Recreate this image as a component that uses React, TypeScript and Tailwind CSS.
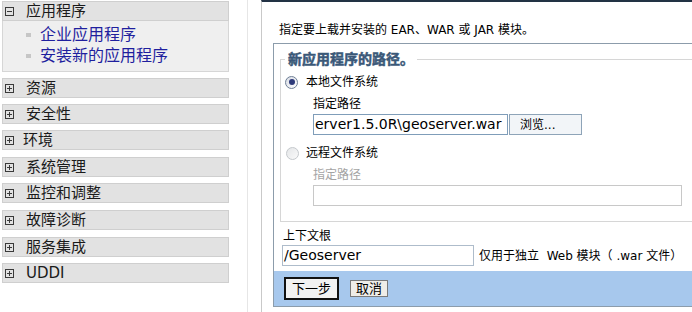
import React from "react";

const cjk = { fontFamily: '"DejaVu Sans", "Noto Sans CJK SC", sans-serif' };

const navItems = [
  { label: "资源", mt: "mt-[6px]", pad: "ml-[12px]" },
  { label: "安全性", mt: "mt-[6px]", pad: "ml-[12px]" },
  { label: "环境", mt: "mt-[6px]", pad: "ml-[9px]" },
  { label: "系统管理", mt: "mt-[7px]", pad: "ml-[12px]" },
  { label: "监控和调整", mt: "mt-[6px]", pad: "ml-[12px]" },
  { label: "故障诊断", mt: "mt-[7px]", pad: "ml-[12px]" },
  { label: "服务集成", mt: "mt-[7px]", pad: "ml-[12px]" },
  { label: "UDDI", mt: "mt-[6px]", pad: "ml-[12px]" },
];

function ToggleBox({ open }: { open?: boolean }) {
  return (
    <svg width="9" height="9" viewBox="0 0 9 9" className="shrink-0">
      <rect x="0.5" y="0.5" width="8" height="8" fill="none" stroke="#3a3a3a" />
      <line x1="2" y1="4.5" x2="7" y2="4.5" stroke="#3a3a3a" />
      {!open && <line x1="4.5" y1="2" x2="4.5" y2="7" stroke="#3a3a3a" />}
    </svg>
  );
}

function Radio({ checked }: { checked?: boolean }) {
  return checked ? (
    <span className="flex h-[13px] w-[13px] items-center justify-center rounded-full border border-[#6f7f96] bg-gradient-to-br from-[#d8dce4] to-white">
      <span className="h-[6px] w-[6px] rounded-full bg-[#2e3a7a]" />
    </span>
  ) : (
    <span className="h-[13px] w-[13px] rounded-full border border-[#c4c8cc] bg-gradient-to-br from-[#e4e6e8] to-[#fafafa]" />
  );
}

export default function App() {
  return (
    <div className="flex h-[312px] w-[692px] overflow-hidden bg-white text-black" style={cjk}>
      {/* left navigation */}
      <div className="w-[248px] shrink-0 border-r border-[#e6e6e6] pl-[2px] pr-[18px] pt-[1px]">
        <div className="flex h-[20px] items-center border border-[#cfcfcf] bg-[#e2e2e2] pl-[2px]">
          <ToggleBox open />
          <span className="ml-[12px] text-[15px] leading-[18px] text-[#1a1a1a]">应用程序</span>
        </div>
        <div className="h-[51px] border-x border-b border-[#d6d6d6] bg-[#efefef] pt-[3px]">
          {["企业应用程序", "安装新的应用程序"].map((s) => (
            <div key={s} className="flex h-[21px] items-center pl-[23px]">
              <span className="h-[4px] w-[5px] bg-[#c6c6c6]" />
              <span className="ml-[9px] text-[16px] leading-[20px] text-[#1f1f9e]">{s}</span>
            </div>
          ))}
        </div>
        {navItems.map((n) => (
          <div
            key={n.label}
            className={`${n.mt} flex h-[20px] items-center border border-[#cfcfcf] bg-[#e2e2e2] pl-[2px]`}
          >
            <ToggleBox />
            <span className={`${n.pad} text-[15px] leading-[18px] text-[#1a1a1a]`}>{n.label}</span>
          </div>
        ))}
      </div>

      {/* main content */}
      <div className="ml-[13px] w-[440px] shrink-0 border-l border-t-2 border-l-[#c9c9c9] border-t-[#223244] pl-[11px]">
        <div className="ml-[6px] mt-[20px] whitespace-pre text-[12px] leading-[16px]">
          指定要上载并安装的 EAR、WAR 或 JAR 模块。
        </div>
        <div className="mt-[5px] border border-[#8c9cab]">
          <fieldset className="ml-[6px] mr-[4px] mt-[6px] border border-[#d6d6d6] pb-[15px]">
            <legend className="ml-[4px] px-[3px] text-[14px] font-bold leading-[18px] text-[#3a5878] [-webkit-text-stroke:0.5px_#3a5878]">
              新应用程序的路径。
            </legend>
            <div className="mt-[6px] flex h-[16px] items-center pl-[4px]">
              <Radio checked />
              <span className="ml-[8px] text-[12px] leading-[16px]">本地文件系统</span>
            </div>
            <div className="mt-[6px] pl-[32px] text-[12px] leading-[16px]">指定路径</div>
            <div className="mt-[2px] flex pl-[32px]">
              <div className="flex h-[21px] w-[195px] items-center overflow-hidden whitespace-nowrap border border-[#7f9db9] pl-[1px] text-[14px]">
                erver1.5.0R\geoserver.war
              </div>
              <div className="ml-[1px] flex h-[21px] w-[73px] items-center border border-[#8ea4b8] bg-[#f2f5f8] pl-[10px] text-[12px]">
                浏览...
              </div>
            </div>
            <div className="mt-[10px] flex h-[16px] items-center pl-[5px]">
              <Radio />
              <span className="ml-[7px] text-[12px] leading-[16px]">远程文件系统</span>
            </div>
            <div className="mt-[6px] pl-[32px] text-[12px] leading-[16px] text-[#a4a4a4]">指定路径</div>
            <div className="mt-[2px] pl-[32px]">
              <div className="h-[21px] w-[369px] border border-[#c8c8c8]" />
            </div>
          </fieldset>
          <div className="ml-[9px] mt-[6px] text-[12px] leading-[16px]">上下文根</div>
          <div className="mt-[1px] flex items-center pl-[8px]">
            <div className="flex h-[21px] w-[192px] items-center border border-[#aebccb] pl-[1px] text-[14px]">
              /Geoserver
            </div>
            <span className="ml-[5px] whitespace-pre text-[12px] leading-[16px]">
              仅用于独立  Web 模块（ .war 文件）
            </span>
          </div>
          <div className="mt-[5px] flex h-[35px] items-center bg-[#a7c8ed] pl-[10px]">
            <div className="flex h-[23px] w-[55px] items-center justify-center border-2 border-[#111] bg-[#f2f2f2] text-[13px]">
              下一步
            </div>
            <div className="ml-[11px] flex h-[17px] w-[38px] items-center justify-center border border-[#7a7a7a] bg-[#efede8] text-[13px]">
              取消
            </div>
          </div>
        </div>
      </div>
    </div>
  );
}
